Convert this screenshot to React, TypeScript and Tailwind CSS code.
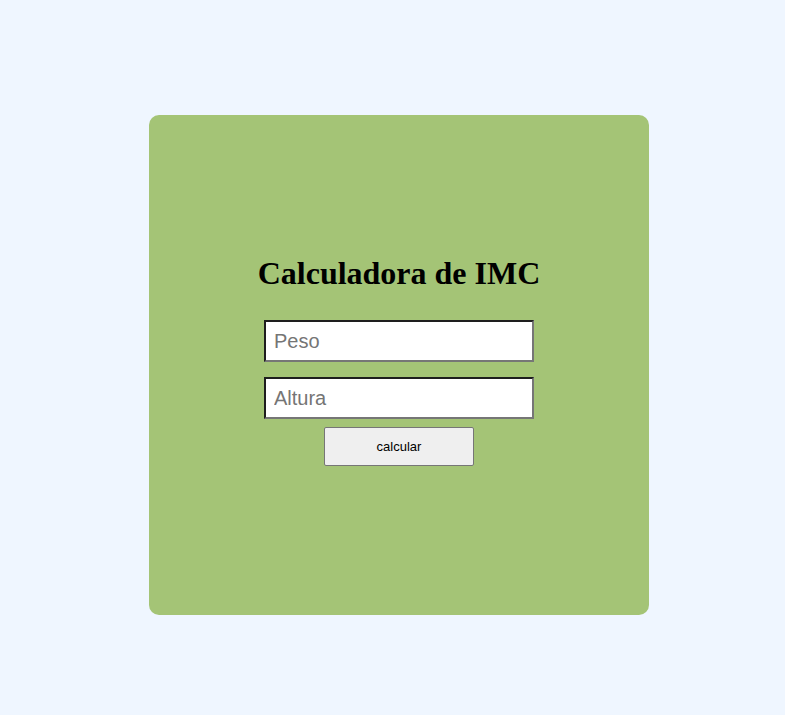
export default function App() {
  return (
    <div className="min-h-[715px] w-full bg-[#eff6ff] pt-[115px] pl-[149px]">
      <div className="flex h-[500px] w-[500px] flex-col items-center rounded-[10px] bg-[#a4c476] pt-[140px]">
        <h1 className="font-['Liberation_Serif',serif] text-[32px] font-bold leading-[36px] text-black">
          Calculadora de IMC
        </h1>
        <form className="mt-[29px] flex flex-col items-center">
          <input
            type="text"
            placeholder="Peso"
            className="h-[42px] w-[270px] border-2 border-t-[#1e1e1e] border-l-[#1e1e1e] border-r-[#767676] border-b-[#767676] bg-white px-[8px] font-['Liberation_Sans',sans-serif] text-[20px] text-black placeholder:text-[#757575] outline-none"
          />
          <input
            type="text"
            placeholder="Altura"
            className="mt-[15px] h-[42px] w-[270px] border-2 border-t-[#1e1e1e] border-l-[#1e1e1e] border-r-[#767676] border-b-[#767676] bg-white px-[8px] font-['Liberation_Sans',sans-serif] text-[20px] text-black placeholder:text-[#757575] outline-none"
          />
          <button
            type="button"
            className="mt-[8px] h-[39px] w-[150px] rounded-[2px] border border-[#767676] bg-[#efefef] font-['Liberation_Sans',sans-serif] text-[13px] text-black"
          >
            calcular
          </button>
        </form>
      </div>
    </div>
  );
}
